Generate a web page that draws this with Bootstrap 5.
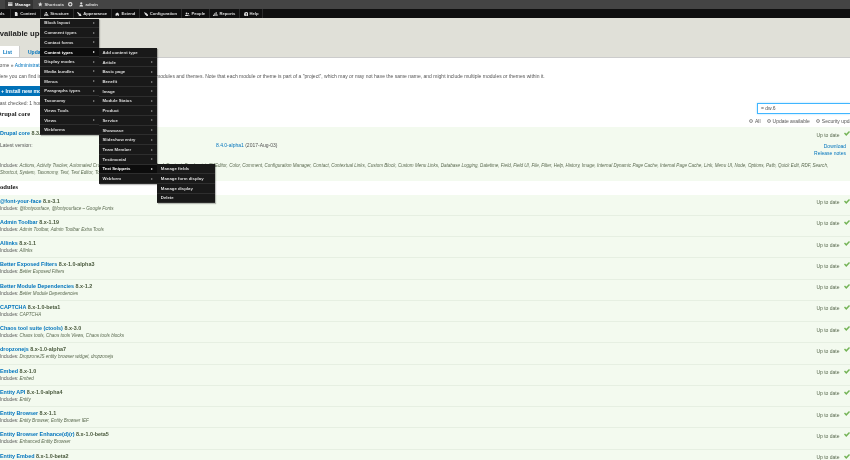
<!DOCTYPE html>
<html lang="en">
<head>
<meta charset="utf-8">
<title>Available updates</title>
<link href="https://cdn.jsdelivr.net/npm/bootstrap@5.3.0/dist/css/bootstrap.min.css" rel="stylesheet">
<style>
html,body{height:460px;overflow:hidden;background:#fff}
body{font-family:"Liberation Sans",Arial,sans-serif;font-size:5px;line-height:7px;color:#555;position:relative;filter:blur(.3px)}
a{color:#0074bd;text-decoration:none}
.bar-top{height:9px;background:#444;color:#ddd;font-weight:700;font-size:4.2px;padding-left:5px}
.bar-top>span{height:9px;display:flex;align-items:center;gap:2.500px}
.bar-top .on{background:#333;color:#fff;width:28px;padding-left:3px}
.bar-top .sp1{margin-left:5px;gap:2px}
.bar-top .sp2{margin-left:4px}
.bar-top .sp3{margin-left:6px}
.bar-top svg,.bar-main svg{width:4.500px;height:4.500px;fill:currentColor;flex:none}
.bar-main{height:9.500px;background:#0f0f0f;color:#ddd;font-weight:700;font-size:4.2px}
.bar-main>span{height:9.500px;display:flex;align-items:center;gap:1.500px;padding:0 3.650px;border-right:.6px solid #2b2b2b}
.bar-main .cut{width:10.500px;padding:0 5px 0 0;justify-content:flex-end;overflow:hidden}
.page-head{height:40px;background:#e0e0d8;border-bottom:1px solid #ccc;margin-top:-.500px;position:relative;overflow:hidden}
.page-title{font-size:7.700px;font-weight:700;color:#222;margin:11px 0 0 -5.600px;line-height:10px;white-space:nowrap}
.page-tabs{height:12px;margin-top:7px}
.tab-on,.tab-off{height:12px;display:flex;align-items:center;font-size:5px;font-weight:700;color:#0074bd}
.tab-on{width:20px;padding-left:3px;background:#fff;border-right:1px solid #ccc}
.tab-off{width:30px;padding-left:8px}
.crumbs{margin:4px 0 0 -4px;white-space:nowrap;height:7px}
.intro{margin:3.500px 0 0 -3px;white-space:nowrap;height:7px}
.install{height:10px;width:84px;margin:6.500px 0 0 -6px;border-radius:5px;background:#0071b8;color:#fff;font-weight:700;font-size:5.200px;padding-left:7px;display:flex;align-items:center}
.checked{margin:4px 0 0 -3px;height:7px;white-space:nowrap}
.sect{font-family:"Liberation Serif",serif;font-weight:700;font-size:6.600px;color:#222;line-height:8px;white-space:nowrap}
.sect-core{margin:3px 0 0 -3.500px}
.tools{position:absolute;top:103px;left:757px;width:93px}
.finder{height:10.500px;width:100%;border:1px solid #40b6ff;box-shadow:0 0 2px #a8dcff;border-right:0;padding-left:3px;display:flex;align-items:center;background:#fff;color:#555}
.pick{position:absolute;top:117.500px;left:749px;width:101px;white-space:nowrap;height:7px;gap:6px;overflow:hidden}
.pick span{display:flex;align-items:center;gap:2px}
.dot{width:4px;height:4px;border-radius:50%;border:.500px solid #999;background:#eee;display:block}
.dot-on{background:radial-gradient(#444 40%,#eee 50%)}
.pkg{background:#f3faef;position:relative}
.pkg-core{height:54px;margin-top:9px;padding-top:2.500px}
.pkg-row{height:21.250px;border-bottom:1px solid #e6efe2;padding-top:3px;white-space:nowrap}
.pkg-name{font-size:5.400px;font-weight:700;line-height:7px}
.pkg-name b{color:#4a5a3e;font-weight:700}
.inc{line-height:7px;font-size:4.550px}
.inc i{color:#5b6a50}
.state{position:absolute;right:.500px;top:4.500px;display:flex;align-items:center;gap:4px;color:#5a6a50;line-height:7px}
.state svg{width:6px;height:5px;margin-top:-3px}
.links{position:absolute;right:4px;top:15.500px;text-align:right;line-height:7px}
.latest{margin-top:5px;height:7px;position:relative}
.latest .ver{position:absolute;left:216px;top:0}
.core-inc{margin-top:13px;white-space:nowrap}
.sect-mod{margin:2px 0 3.500px -6.200px;height:8px}
.fly{position:absolute;margin:0;padding:0;list-style:none;background:#191919;box-shadow:1px 1px 1px rgba(0,0,0,.25);z-index:5;width:58.300px}
.fly li{height:9.720px;border-bottom:.6px solid #2e2e2e;color:#ddd;font-weight:700;font-size:4.300px;padding:0 3.500px 0 4px;display:flex;align-items:center;justify-content:space-between;white-space:nowrap}
.fly li.hot{background:#0c0c0c;color:#fff}
.fly li.more::after{content:"";border-left:2px solid #888;border-top:1.200px solid transparent;border-bottom:1.200px solid transparent}
.fly li.hot.more::after{border-left-color:#eee}
.fly-a{left:40.300px;top:18.500px}
.fly-b{left:98.500px;top:48px}
.fly-c{left:156.800px;top:164.400px}
</style>
</head>
<body>
<div class="bar-top d-flex align-items-center">
<span class="on"><svg viewBox="0 0 10 10"><path d="M0 1h10v2H0zM0 4h10v2H0zM0 7h10v2H0z"/></svg>Manage</span>
<span class="sp1"><svg viewBox="0 0 10 10"><path d="M5 0l1.500 3.400 3.500.4-2.600 2.400.7 3.600L5 8 1.900 9.800l.7-3.600L0 3.800l3.500-.4z"/></svg>Shortcuts</span>
<span class="sp2"><svg viewBox="0 0 10 10"><path fill-rule="evenodd" d="M5 0a5 5 0 100 10A5 5 0 005 0zm0 2.500a2.500 2.500 0 110 5 2.500 2.500 0 010-5z"/></svg></span>
<span class="sp3"><svg viewBox="0 0 10 10"><circle cx="5" cy="2.800" r="2.500"/><path d="M1 10c0-3 1.500-4 4-4s4 1 4 4z"/></svg>admin</span>
</div>
<div class="bar-main d-flex align-items-center">
<span class="cut">ols</span>
<span><svg viewBox="0 0 10 10"><path d="M2 0h4l2 2v8H2z"/></svg>Content</span>
<span><svg viewBox="0 0 10 10"><path d="M3.500 0h3v3h-3zM0 7h3v3H0zM3.500 7h3v3h-3zM7 7h3v3H7zM1 4h8v2H1z"/></svg>Structure</span>
<span><svg viewBox="0 0 10 10"><path d="M0 1l2-1 4 4 1-1 3 5-2 2-5-3 1-1z"/></svg>Appearance</span>
<span><svg viewBox="0 0 10 10"><path d="M0 5l5-4 5 4H8.500v5h-2V7h-3v3h-2V5z"/></svg>Extend</span>
<span><svg viewBox="0 0 10 10"><path d="M1 0l2 2 1-1 6 6-3 3-6-6 1-1-2-2z"/></svg>Configuration</span>
<span><svg viewBox="0 0 10 10"><circle cx="3.500" cy="3" r="2"/><circle cx="7.500" cy="3.500" r="1.500"/><path d="M0 9c0-2 1-3 3.500-3S7 7 7 9zM7.500 6C9 6 10 7 10 9H8c0-1-.2-2-.5-3z"/></svg>People</span>
<span><svg viewBox="0 0 10 10"><path d="M0 6h2v4H0zM3 3h2v7H3zM6 0h2v10H6zM9 5h1v5H9z"/></svg>Reports</span>
<span><svg viewBox="0 0 10 10"><path fill-rule="evenodd" d="M5 0a5 5 0 100 10A5 5 0 005 0zM4 2h2v4H4zm0 5h2v1.500H4z"/></svg>Help</span>
</div>

<header class="page-head">
<h1 class="page-title">Available updates</h1>
<div class="page-tabs d-flex"><div class="tab-on">List</div><div class="tab-off">Update</div></div>
</header>

<main>
<div class="crumbs">Home » <a href="#">Administration</a></div>
<div class="intro">Here you can find information about available updates for your installed modules and themes. Note that each module or theme is part of a "project", which may or may not have the same name, and might include multiple modules or themes within it.</div>
<a class="install" href="#">+ Install new module</a>
<div class="checked">Last checked: 1 hour 3 min ago</div>
<div class="sect sect-core">Drupal core</div>
<div class="pkg pkg-core">
<div class="pkg-name"><a href="#">Drupal core</a> <b>8.3.5</b></div>
<div class="state">Up to date <svg viewBox="0 0 12 10"><path d="M0 5l2-2 2.500 2.500L10 0l2 2-7.500 8z" fill="#73b355"/></svg></div>
<div class="links"><a class="d-block" href="#">Download</a><a class="d-block" href="#">Release notes</a></div>
<div class="latest">Latest version:<span class="ver"><a href="#">8.4.0-alpha1</a> (2017-Aug-03)</span></div>
<div class="core-inc inc">Includes: <i>Actions, Activity Tracker, Automated Cron, Ban, Basic Auth, Block, Block Content, Breakpoint, CKEditor, Color, Comment, Configuration Manager, Contact, Contextual Links, Custom Block, Custom Menu Links, Database Logging, Datetime, Field, Field UI, File, Filter, Help, History, Image, Internal Dynamic Page Cache, Internal Page Cache, Link, Menu UI, Node, Options, Path, Quick Edit, RDF, Search,<br>Shortcut, System, Taxonomy, Text, Text Editor, Toolbar, Tour, Update, User, Views, Views UI</i></div>
</div>
<div class="sect sect-mod">Modules</div>
<div class="pkg pkg-row"><div class="pkg-name"><a href="#">@font-your-face</a> <b>8.x-3.1</b></div><div class="inc">Includes: <i>@fontyourface, @fontyourface – Google Fonts</i></div><div class="state">Up to date <svg viewBox="0 0 12 10"><path d="M0 5l2-2 2.500 2.500L10 0l2 2-7.500 8z" fill="#73b355"/></svg></div></div>
<div class="pkg pkg-row"><div class="pkg-name"><a href="#">Admin Toolbar</a> <b>8.x-1.19</b></div><div class="inc">Includes: <i>Admin Toolbar, Admin Toolbar Extra Tools</i></div><div class="state">Up to date <svg viewBox="0 0 12 10"><path d="M0 5l2-2 2.500 2.500L10 0l2 2-7.500 8z" fill="#73b355"/></svg></div></div>
<div class="pkg pkg-row"><div class="pkg-name"><a href="#">Allinks</a> <b>8.x-1.1</b></div><div class="inc">Includes: <i>Allinks</i></div><div class="state">Up to date <svg viewBox="0 0 12 10"><path d="M0 5l2-2 2.500 2.500L10 0l2 2-7.500 8z" fill="#73b355"/></svg></div></div>
<div class="pkg pkg-row"><div class="pkg-name"><a href="#">Better Exposed Filters</a> <b>8.x-1.0-alpha3</b></div><div class="inc">Includes: <i>Better Exposed Filters</i></div><div class="state">Up to date <svg viewBox="0 0 12 10"><path d="M0 5l2-2 2.500 2.500L10 0l2 2-7.500 8z" fill="#73b355"/></svg></div></div>
<div class="pkg pkg-row"><div class="pkg-name"><a href="#">Better Module Dependencies</a> <b>8.x-1.2</b></div><div class="inc">Includes: <i>Better Module Dependencies</i></div><div class="state">Up to date <svg viewBox="0 0 12 10"><path d="M0 5l2-2 2.500 2.500L10 0l2 2-7.500 8z" fill="#73b355"/></svg></div></div>
<div class="pkg pkg-row"><div class="pkg-name"><a href="#">CAPTCHA</a> <b>8.x-1.0-beta1</b></div><div class="inc">Includes: <i>CAPTCHA</i></div><div class="state">Up to date <svg viewBox="0 0 12 10"><path d="M0 5l2-2 2.500 2.500L10 0l2 2-7.500 8z" fill="#73b355"/></svg></div></div>
<div class="pkg pkg-row"><div class="pkg-name"><a href="#">Chaos tool suite (ctools)</a> <b>8.x-3.0</b></div><div class="inc">Includes: <i>Chaos tools, Chaos tools Views, Chaos tools blocks</i></div><div class="state">Up to date <svg viewBox="0 0 12 10"><path d="M0 5l2-2 2.500 2.500L10 0l2 2-7.500 8z" fill="#73b355"/></svg></div></div>
<div class="pkg pkg-row"><div class="pkg-name"><a href="#">dropzonejs</a> <b>8.x-1.0-alpha7</b></div><div class="inc">Includes: <i>DropzoneJS entity browser widget, dropzonejs</i></div><div class="state">Up to date <svg viewBox="0 0 12 10"><path d="M0 5l2-2 2.500 2.500L10 0l2 2-7.500 8z" fill="#73b355"/></svg></div></div>
<div class="pkg pkg-row"><div class="pkg-name"><a href="#">Embed</a> <b>8.x-1.0</b></div><div class="inc">Includes: <i>Embed</i></div><div class="state">Up to date <svg viewBox="0 0 12 10"><path d="M0 5l2-2 2.500 2.500L10 0l2 2-7.500 8z" fill="#73b355"/></svg></div></div>
<div class="pkg pkg-row"><div class="pkg-name"><a href="#">Entity API</a> <b>8.x-1.0-alpha4</b></div><div class="inc">Includes: <i>Entity</i></div><div class="state">Up to date <svg viewBox="0 0 12 10"><path d="M0 5l2-2 2.500 2.500L10 0l2 2-7.500 8z" fill="#73b355"/></svg></div></div>
<div class="pkg pkg-row"><div class="pkg-name"><a href="#">Entity Browser</a> <b>8.x-1.1</b></div><div class="inc">Includes: <i>Entity Browser, Entity Browser IEF</i></div><div class="state">Up to date <svg viewBox="0 0 12 10"><path d="M0 5l2-2 2.500 2.500L10 0l2 2-7.500 8z" fill="#73b355"/></svg></div></div>
<div class="pkg pkg-row"><div class="pkg-name"><a href="#">Entity Browser Enhance(d)(r)</a> <b>8.x-1.0-beta5</b></div><div class="inc">Includes: <i>Enhanced Entity Browser</i></div><div class="state">Up to date <svg viewBox="0 0 12 10"><path d="M0 5l2-2 2.500 2.500L10 0l2 2-7.500 8z" fill="#73b355"/></svg></div></div>
<div class="pkg pkg-row"><div class="pkg-name"><a href="#">Entity Embed</a> <b>8.x-1.0-beta2</b></div><div class="inc">Includes: <i>Entity Embed</i></div><div class="state">Up to date <svg viewBox="0 0 12 10"><path d="M0 5l2-2 2.500 2.500L10 0l2 2-7.500 8z" fill="#73b355"/></svg></div></div>
</main>

<div class="tools"><div class="finder">= dw.6</div></div>
<div class="pick d-flex align-items-center"><span><i class="dot dot-on"></i>All</span><span><i class="dot"></i>Update available</span><span><i class="dot"></i>Security update</span></div>

<ul class="fly fly-a">
<li class="more">Block layout</li><li class="more">Comment types</li><li class="more">Contact forms</li><li class="more hot">Content types</li><li class="more">Display modes</li><li class="more">Media bundles</li><li class="more">Menus</li><li class="more">Paragraphs types</li><li class="more">Taxonomy</li><li>Views Tools</li><li class="more">Views</li><li>Webforms</li>
</ul>
<ul class="fly fly-b">
<li>Add content type</li><li class="more">Article</li><li class="more">Basic page</li><li class="more">Benefit</li><li class="more">Image</li><li class="more">Module Status</li><li class="more">Product</li><li class="more">Service</li><li class="more">Showcase</li><li class="more">Slideshow entry</li><li class="more">Team Member</li><li class="more">Testimonial</li><li class="more hot">Text Snippets</li><li class="more">Webform</li>
</ul>
<ul class="fly fly-c">
<li>Manage fields</li><li>Manage form display</li><li>Manage display</li><li>Delete</li>
</ul>
<script src="https://cdn.jsdelivr.net/npm/bootstrap@5.3.0/dist/js/bootstrap.bundle.min.js"></script>
</body>
</html>
